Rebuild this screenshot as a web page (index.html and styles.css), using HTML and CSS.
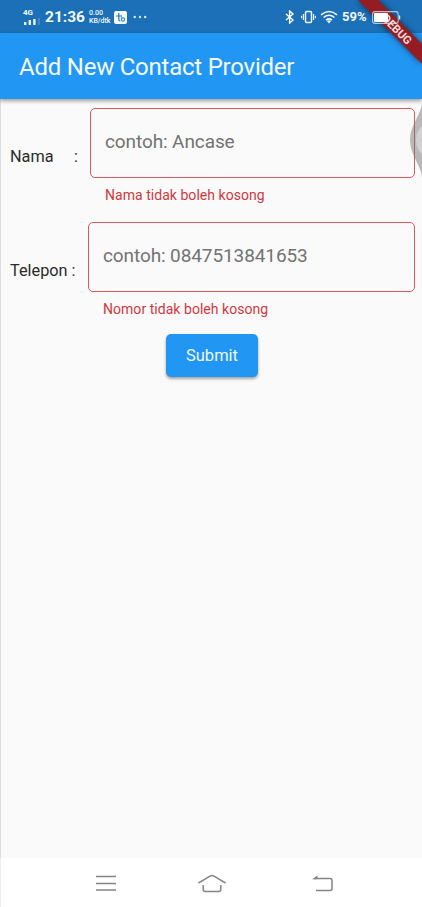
FILE: index.html
```html
<!DOCTYPE html>
<html lang="id">
<head>
<meta charset="utf-8">
<meta name="viewport" content="width=device-width, initial-scale=1">
<title>Add New Contact Provider</title>
<link rel="stylesheet" href="styles.css">
</head>
<body>
<div class="phone">
  <div class="status">
    <div class="signal">
      <span class="net">4G</span>
      <svg width="18" height="7" viewBox="0 0 18 7"><g fill="#eaf4fc"><rect x="1" y="4" width="2.4" height="3"/><rect x="5.6" y="2" width="2.4" height="5"/><rect x="10.2" y="1" width="2.4" height="6"/></g><rect x="15.2" y="0" width="1.6" height="7" fill="#4a8fc8"/></svg>
    </div>
    <span class="clock">21:36</span>
    <div class="speed"><span>0.00</span><span>KB/dtk</span></div>
    <svg class="app" width="13" height="13" viewBox="0 0 13 13"><rect width="13" height="13" rx="2" fill="#f4f9fe"/><path d="M4.8 2v6.500q0 1.500 1.500 1.500M2 5h5" fill="none" stroke="#2b72b4" stroke-width="1.2"/><path d="M7.500 4v5.500" fill="none" stroke="#6aa6da"/><circle cx="9" cy="8.500" r="1.6" fill="none" stroke="#3c91d8" stroke-width="1.2"/></svg>
    <svg class="more" width="14" height="4" viewBox="0 0 14 4" fill="#d8eafa"><circle cx="1.7" cy="2" r="1.2"/><circle cx="7" cy="2" r="1.2"/><circle cx="12.200" cy="2" r="1.2"/></svg>
    <div class="right">
      <svg width="10" height="14" viewBox="0 0 10 14"><path d="M1 4l7 6-3.400 3V1L8 4l-7 6" fill="none" stroke="#fff" stroke-width="1.4"/></svg>
      <svg class="vib" width="15" height="14" viewBox="0 0 15 14" fill="none" stroke="#eef7ff"><rect x="4.500" y="1.500" width="6" height="11" rx="1" stroke-width="1.500"/><path d="M2.400 4v6M12.600 4v6M.6 5.700v2.600M14.400 5.700v2.600" stroke-width="1.100"/></svg>
      <svg class="wifi" width="18" height="14" viewBox="0 0 18 14" fill="none" stroke="#f2f9ff" stroke-width="1.600"><path d="M1 4.800Q9-1.800 17 4.800M3.600 7.500Q9 3 14.400 7.500M6 10.200q3-2.500 6 0"/><path d="M6.800 11Q9 9.400 11.200 11L9 13.600z" fill="#f2f9ff" stroke="none"/></svg>
      <span class="pct">59%</span>
      <svg class="batt" width="29" height="13" viewBox="0 0 29 13"><rect x=".6" y=".6" width="25.600" height="11.800" rx="2.500" fill="none" stroke="#dcebf7" stroke-opacity=".75" stroke-width="1.100"/><rect x="2" y="2" width="14" height="9" rx="1" fill="#fff"/><path d="M27.600 4.500v4" stroke="#d7e8f6" stroke-width="1.300"/></svg>
    </div>
  </div>
  <header class="appbar"><h1>Add New Contact Provider</h1></header>
  <main class="form">
    <div class="row">
      <label class="name" for="nama"><span>Nama</span><span>:</span></label>
      <div class="field"><input id="nama" placeholder="contoh: Ancase"><p class="error">Nama tidak boleh kosong</p></div>
    </div>
    <div class="row second">
      <label class="tel" for="telepon">Telepon :</label>
      <div class="field"><input id="telepon" placeholder="contoh: 0847513841653"><p class="error">Nomor tidak boleh kosong</p></div>
    </div>
    <button class="submit" type="button">Submit</button>
  </main>
  <nav class="nav">
    <svg width="22" height="17" viewBox="0 0 22 17"><path d="M1 1.500h20M1 8.500h20M1 15h20" stroke="#858585" stroke-width="1.400"/></svg>
    <svg class="home" width="30" height="19" viewBox="0 0 30 19" fill="none" stroke="#858585" stroke-width="1.500"><path d="M1.500 9L13 2.200Q15 1 17 2.200L28.500 9"/><path d="M6.200 11v4.500q0 2 2 2h13.600q2 0 2-2V11"/></svg>
    <svg class="back" width="22" height="18" viewBox="0 0 22 18"><path d="M2 3.500h16q2 0 2 2v8q0 2-2 2H4" fill="none" stroke="#858585" stroke-width="1.500"/><path d="M0 4.200L5.500.5v3.700z" fill="#858585"/></svg>
  </nav>
  <svg class="handle" width="12" height="74" viewBox="0 0 12 74"><path d="M12 0C11 12 0 22 0 37S11 62 12 74z" fill="#777" fill-opacity=".5"/><path d="M12 23Q6 29 6 37t6 14z" fill="#d2d2d2"/></svg>
  <div class="ribbon">
    <svg width="72" height="80" viewBox="0 0 72 80">
      <defs><filter id="soft" x="-30%" y="-30%" width="160%" height="160%"><feGaussianBlur stdDeviation="3"/></filter></defs>
      <path d="M8 0h20l44 44v20z" fill="#000" fill-opacity=".6" filter="url(#soft)"/>
      <path d="M8 0h20l44 44v20z" fill="#951c23"/>
      <g transform="translate(47 29.500) rotate(45)"><text class="debug" y="4" text-anchor="middle">DEBUG</text></g>
    </svg>
  </div>
</div>
</body>
</html>
```
FILE: styles.css
```css
* { box-sizing: border-box; }
body { margin: 0; font-family: Roboto, sans-serif; background: #fafafa; }
svg { display: block; flex: none; }
.phone { position: relative; width: 422px; height: 907px; overflow: hidden; display: flex; flex-direction: column; background: #fafafa; box-shadow: inset 1px 0 #dedede; }
.status { height: 33px; flex: none; background: #1b70b7; display: flex; align-items: center; padding: 1px 21px 0 23px; color: #f3f9ff; }
.signal { width: 18px; display: flex; flex-direction: column; gap: 1px; }
.net { font-size: 8px; line-height: 8px; font-weight: 700; }
.clock { width: 40px; margin-left: 4px; font-size: 15.5px; line-height: 18px; font-weight: 700; }
.speed { width: 23px; margin-left: 4px; display: flex; flex-direction: column; font-size: 7px; line-height: 8px; font-weight: 500; white-space: nowrap; }
.app { margin-left: 2px; }
.more { margin-left: 6px; }
.right { margin-left: auto; display: flex; align-items: center; }
.vib { margin-left: 6px; }
.wifi { margin-left: 4px; }
.pct { width: 26px; margin-left: 4px; font-size: 13px; line-height: 16px; font-weight: 700; }
.batt { position: relative; z-index: 2; margin-left: 4px; }
.appbar { position: relative; height: 66px; flex: none; background: #2296f3; display: flex; align-items: center; padding: 1px 19px 0; box-shadow: 0 2px 4px rgba(0,0,0,.38); }
h1 { margin: 0; color: #f4faff; font-size: 24px; line-height: 30px; font-weight: 400; letter-spacing: -.23px; white-space: nowrap; }
.form { flex: 1; display: flex; flex-direction: column; padding: 9px 7px 0 10px; }
.row { display: flex; align-items: center; height: 96px; }
.second { margin-top: 18px; }
.row label { flex: none; color: #2b2b2b; font-size: 16.3px; line-height: 20px; padding-top: 1px; }
.name { width: 80px; display: flex; justify-content: space-between; padding-right: 12px; }
.row .tel { width: 78px; }
.field { flex: 1; min-width: 0; }
input { display: block; width: 100%; height: 70px; border: 1.5px solid #d9595e; border-radius: 5px; padding: 0 14px 3px; outline: 0; background: transparent; color: #333; font: 19px/24px Roboto, sans-serif; letter-spacing: -.1px; }
input::placeholder { color: #737373; opacity: 1; }
.error { margin: 9px 0 0 15px; color: #d0383e; font-size: 14px; line-height: 17px; letter-spacing: .04px; white-space: nowrap; }
.submit { align-self: center; width: 92px; height: 43px; margin: 16px 1px 0 0; padding: 0; border: 0; border-radius: 5px; background: #2296f3; color: #eef8ff; font: 16.5px/20px Roboto, sans-serif; box-shadow: 0 2px 3px rgba(0,0,0,.35); }
.nav { height: 49px; flex: none; background: #fff; display: flex; align-items: center; padding: 2px 0 0 95px; box-shadow: inset 1px 0 #eee; }
.home { margin-left: 80px; }
.back { margin-left: 85px; }
.handle { position: absolute; right: 0; top: 103px; }
.ribbon { position: absolute; right: 0; top: 0; }
.debug { fill: #f1dada; font: 700 11.5px Roboto, sans-serif; }
```
